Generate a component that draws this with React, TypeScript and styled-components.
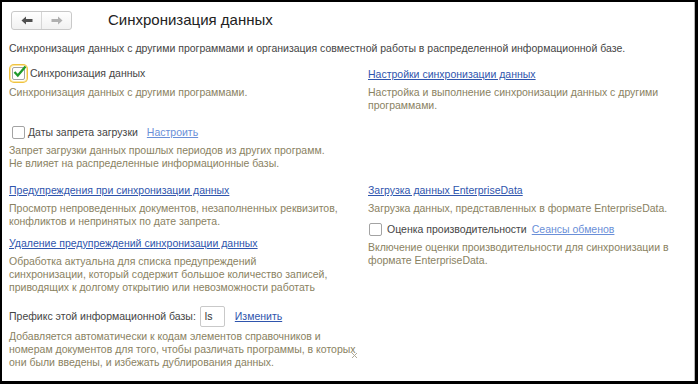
import React from "react";
import styled, { createGlobalStyle } from "styled-components";

const Global = createGlobalStyle`
  html, body { margin: 0; padding: 0; background: #fff; }
  body { font-family: Arial, "Liberation Sans", sans-serif; }
`;

const Frame = styled.div`
  position: relative;
  box-sizing: border-box;
  width: 698px;
  height: 384px;
  border-left: 2px solid #000;
  border-top: 2px solid #000;
  border-right: 3px solid #000;
  border-bottom: 3px solid #000;
  background: #fff;
  overflow: hidden;
  font-size: 10.5px;
  color: #454545;
`;

const Inner = styled.div`
  box-sizing: border-box;
  height: 100%;
  border-right: 1px solid #b8b8b8;
  padding: 9px 0 0 7px;
`;

const Header = styled.div`
  display: flex;
  align-items: center;
  height: 18px;
`;

const NavGroup = styled.div`
  display: flex;
  margin-left: 2px;
  height: 19px;
  border: 1px solid #c9c9c9;
  border-radius: 3px;
  background: linear-gradient(#ffffff, #f1f1f1);
  box-sizing: border-box;
`;

const NavButton = styled.div<{ $divider?: boolean }>`
  width: 29px;
  display: flex;
  align-items: center;
  justify-content: center;
  border-left: ${(p) => (p.$divider ? "1px solid #d6d6d6" : "none")};
`;

const Title = styled.div`
  margin-left: 36px;
  font-size: 15px;
  color: #222;
  line-height: 18px;
`;

const Intro = styled.div`
  margin-top: 13px;
  line-height: 13px;
  white-space: nowrap;
  color: #454545;
`;

const Grid = styled.div`
  display: grid;
  grid-template-columns: 359px 320px;
  margin-top: 10px;
`;

const Col = styled.div<{ $top?: number }>`
  display: flex;
  flex-direction: column;
  align-items: flex-start;
  padding-top: ${(p) => p.$top ?? 0}px;
`;

const CheckRow = styled.div<{ $mt?: number }>`
  display: flex;
  align-items: center;
  height: 17px;
  margin-top: ${(p) => p.$mt ?? 0}px;
  line-height: 13px;
  white-space: nowrap;
`;

const Box = styled.div<{ $focus?: boolean; $ml?: number; $mr?: number }>`
  position: relative;
  box-sizing: border-box;
  width: 13px;
  height: 13px;
  margin-left: ${(p) => p.$ml ?? 3}px;
  margin-right: ${(p) => p.$mr ?? 3}px;
  border: 1px solid #a3a3a3;
  border-radius: 2px;
  background: #fff;
  box-shadow: ${(p) =>
    p.$focus ? "0 0 0 1px #fff, 0 0 0 2px #fbe7a0, 0 0 0 3px #f0c240" : "none"};
`;

const Label = styled.span`
  color: #454545;
`;

const Note = styled.div<{ $mt?: number }>`
  margin-top: ${(p) => p.$mt ?? 0}px;
  line-height: 13px;
  color: #8a8262;
  white-space: nowrap;
`;

const Link = styled.a<{ $light?: boolean; $mt?: number; $ml?: number }>`
  display: block;
  margin-top: ${(p) => p.$mt ?? 0}px;
  margin-left: ${(p) => p.$ml ?? 0}px;
  line-height: 13px;
  color: ${(p) => (p.$light ? "#6a8fd8" : "#2f55ad")};
  text-decoration: underline;
  text-underline-offset: 1px;
  white-space: nowrap;
  cursor: pointer;
`;

const PrefixRow = styled.div`
  display: flex;
  align-items: center;
  height: 20px;
  margin-top: 12px;
  white-space: nowrap;
`;

const PrefixInput = styled.div`
  box-sizing: border-box;
  width: 25px;
  height: 21px;
  margin-left: 4px;
  margin-right: 10px;
  border: 1px solid #c9c9c9;
  border-radius: 2px;
  padding-left: 4px;
  line-height: 19px;
  color: #333;
`;

const Grip = styled.div`
  position: absolute;
  left: 349px;
  top: 347px;
  width: 7px;
  height: 7px;
`;

const Arrow = ({ dir, color }: { dir: "left" | "right"; color: string }) => (
  <svg width="12" height="9" viewBox="0 0 12 9">
    {dir === "left" ? (
      <path d="M0.5 4.5 L5 0.5 V3 H11.5 V6 H5 V8.5 Z" fill={color} />
    ) : (
      <path d="M11.5 4.5 L7 0.5 V3 H0.5 V6 H7 V8.5 Z" fill={color} />
    )}
  </svg>
);

const Check = () => (
  <svg
    width="14"
    height="13"
    viewBox="0 0 14 13"
    style={{ position: "absolute", left: 0, top: -3 }}
  >
    <path d="M1.5 7 L4.8 10.5 L12.5 1.5" fill="none" stroke="#1f9a2c" strokeWidth="2.3" />
  </svg>
);

export default function App() {
  return (
    <>
      <Global />
      <Frame>
        <Inner>
          <Header>
            <NavGroup>
              <NavButton>
                <Arrow dir="left" color="#505050" />
              </NavButton>
              <NavButton $divider>
                <Arrow dir="right" color="#b0b0b0" />
              </NavButton>
            </NavGroup>
            <Title>Синхронизация данных</Title>
          </Header>
          <Intro>
            Синхронизация данных с другими программами и организация совместной работы в распределенной информационной базе.
          </Intro>
          <Grid>
            <Col>
              <CheckRow>
                <Box $focus $mr={5}>
                  <Check />
                </Box>
                <Label>Синхронизация данных</Label>
              </CheckRow>
              <Note $mt={4}>Синхронизация данных с другими программами.</Note>

              <CheckRow $mt={25}>
                <Box />
                <Label>Даты запрета загрузки</Label>
                <Link $light $ml={9}>Настроить</Link>
              </CheckRow>
              <Note $mt={3}>
                Запрет загрузки данных прошлых периодов из других программ.
                <br />
                Не влияет на распределенные информационные базы.
              </Note>

              <Link $mt={14}>Предупреждения при синхронизации данных</Link>
              <Note $mt={5}>
                Просмотр непроведенных документов, незаполненных реквизитов,
                <br />
                конфликтов и непринятых по дате запрета.
              </Note>
              <Link $mt={9}>Удаление предупреждений синхронизации данных</Link>
              <Note $mt={5}>
                Обработка актуальна для списка предупреждений
                <br />
                синхронизации, который содержит большое количество записей,
                <br />
                приводящих к долгому открытию или невозможности работать
              </Note>

              <PrefixRow>
                <Label>Префикс этой информационной базы:</Label>
                <PrefixInput>ls</PrefixInput>
                <Link>Изменить</Link>
              </PrefixRow>
              <Note $mt={4}>
                Добавляется автоматически к кодам элементов справочников и
                <br />
                номерам документов для того, чтобы различать программы, в которых
                <br />
                они были введены, и избежать дублирования данных.
              </Note>
            </Col>
            <Col $top={3}>
              <Link>Настройки синхронизации данных</Link>
              <Note $mt={5}>
                Настройка и выполнение синхронизации данных с другими
                <br />
                программами.
              </Note>

              <Link $mt={72}>Загрузка данных EnterpriseData</Link>
              <Note $mt={5}>Загрузка данных, представленных в формате EnterpriseData.</Note>
              <CheckRow $mt={6}>
                <Box $ml={1} $mr={5} />
                <Label>Оценка производительности</Label>
                <Link $light $ml={5}>Сеансы обменов</Link>
              </CheckRow>
              <Note $mt={3}>
                Включение оценки производительности для синхронизации в
                <br />
                формате EnterpriseData.
              </Note>
            </Col>
          </Grid>
        </Inner>
        <Grip>
          <svg width="7" height="7" viewBox="0 0 7 7">
            <path d="M1 1 L6 6 M6 1 L1 6" stroke="#b0ab98" strokeWidth="1" />
          </svg>
        </Grip>
      </Frame>
    </>
  );
}
